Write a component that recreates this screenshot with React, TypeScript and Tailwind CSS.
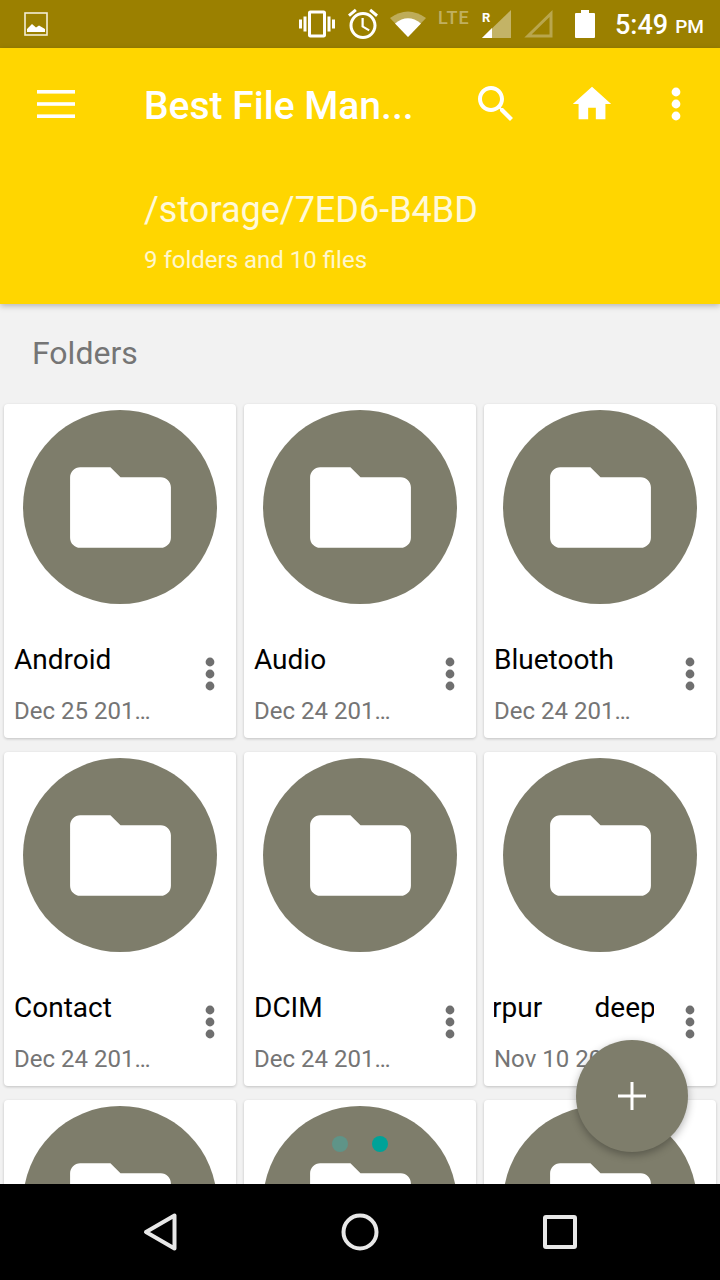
import React from 'react';

const folders = [
  { name: 'Android', date: 'Dec 25 201…' },
  { name: 'Audio', date: 'Dec 24 201…' },
  { name: 'Bluetooth', date: 'Dec 24 201…' },
  { name: 'Contact', date: 'Dec 24 201…' },
  { name: 'DCIM', date: 'Dec 24 201…' },
  { name: 'rpur        deep', date: 'Nov 10 201…', pull: true },
  { name: 'Download', date: 'Dec 24 201…' },
  { name: 'Movies', date: 'Dec 24 201…' },
  { name: 'Music', date: 'Dec 24 201…' },
];

function Kebab({ className, fill }: { className: string; fill: string }) {
  return (
    <svg viewBox="0 0 10 34" className={className} fill={fill}>
      <circle cx="5" cy="5" r="4.4" />
      <circle cx="5" cy="17" r="4.4" />
      <circle cx="5" cy="29" r="4.4" />
    </svg>
  );
}

function StatusBar() {
  return (
    <div className="h-[48px] shrink-0 bg-[#9b8000] flex items-center text-white">
      <svg viewBox="0 0 24 24" className="ml-[24px] w-[24px] h-[24px]" fill="none">
        <rect x="1" y="1" width="22" height="22" stroke="#f3edd5" strokeWidth="1.6" />
        <path d="M3 20 L3 17 L8 12 L12 15.5 L15 13.5 L21 17 L21 20 Z" fill="#fff" />
      </svg>
      <svg viewBox="0 0 24 24" className="ml-[251px] w-[36px] h-[36px]" fill="#fff">
        <path d="M0 15h2V9H0v6zm3 2h2V7H3v10zm19-8v6h2V9h-2zm-3 8h2V7h-2v10zM16.5 3h-9C6.67 3 6 3.67 6 4.5v15c0 .83.67 1.5 1.5 1.5h9c.83 0 1.5-.67 1.5-1.5v-15c0-.83-.67-1.5-1.5-1.5zM16 19H8V5h8v14z" />
      </svg>
      <svg viewBox="0 0 24 24" className="ml-[10px] w-[36px] h-[36px]" fill="#fff">
        <path d="M22 5.72l-4.6-3.86-1.29 1.53 4.6 3.86L22 5.72zM7.88 3.39L6.6 1.86 2 5.71l1.29 1.53 4.59-3.85zM12.5 8H11v6l4.75 2.85.75-1.23-4-2.37V8zM12 4c-4.97 0-9 4.03-9 9s4.03 9 9 9 9-4.03 9-9-4.03-9-9-9zm0 16c-3.87 0-7-3.13-7-7s3.13-7 7-7 7 3.13 7 7-3.13 7-7 7z" />
      </svg>
      <svg viewBox="0 0 36 28" className="ml-[9px] w-[36px] h-[28px]" fill="#fff">
        <path d="M0 8 Q18 -5 36 8 L18 27 Z" opacity="0.35" />
        <path d="M5 13.5 Q18 3 31 13.5 L18 27 Z" />
      </svg>
      <span className="ml-[12px] w-[40px] -mt-[12px] text-[18px] leading-[18px] font-medium tracking-[1px] text-white/40">LTE</span>
      <div className="relative w-[30px] h-[30px] ml-[3px]">
        <svg viewBox="0 0 30 30" className="w-[30px] h-[30px]" fill="#fff">
          <path d="M30 1 L30 29 L1 29 Z" opacity="0.4" />
          <path d="M11 19 L11 29 L1 29 Z" />
        </svg>
        <span className="absolute left-[1px] top-[2px] text-[13px] leading-[14px] font-bold">R</span>
      </div>
      <svg viewBox="0 0 30 30" className="ml-[13px] w-[30px] h-[30px]" fill="none">
        <path d="M27 4.5 L27 27 L4 27 Z" stroke="#fff" strokeOpacity="0.3" strokeWidth="3" />
      </svg>
      <svg viewBox="0 0 20 28" className="ml-[21px] w-[20px] h-[28px]" fill="#fff">
        <path d="M6 0h8v3h5a1 1 0 0 1 1 1v23a1 1 0 0 1-1 1H1a1 1 0 0 1-1-1V4a1 1 0 0 1 1-1h5z" />
      </svg>
      <span className="ml-[20px] mt-[2px] text-[27px] leading-[32px] font-medium">5:49</span>
      <span className="ml-[7px] mt-[5px] text-[19px] leading-[24px] font-medium">PM</span>
    </div>
  );
}

function AppHeader() {
  return (
    <header className="h-[256px] shrink-0 bg-[#ffd600] text-white shadow-[0_2px_6px_rgba(0,0,0,0.25)] z-10">
      <div className="h-[112px] flex items-center">
        <svg viewBox="0 0 38 28" className="ml-[37px] w-[38px] h-[28px]" fill="#fff">
          <rect y="0" width="38" height="3.6" />
          <rect y="12.2" width="38" height="3.6" />
          <rect y="24.4" width="38" height="3.6" />
        </svg>
        <h1 className="ml-[69px] mt-[4px] w-[301px] text-[39px] leading-[48px] font-medium whitespace-nowrap">Best File Man...</h1>
        <svg viewBox="0 0 24 24" className="ml-[27px] w-[48px] h-[48px]" fill="#fff">
          <path d="M15.5 14h-.79l-.28-.27C15.41 12.59 16 11.11 16 9.5 16 5.91 13.09 3 9.5 3S3 5.91 3 9.5 5.91 16 9.5 16c1.61 0 3.09-.59 4.23-1.57l.27.28v.79l5 4.99L20.49 19l-4.99-5zm-6 0C7.01 14 5 11.99 5 9.5S7.01 5 9.5 5 14 7.01 14 9.5 11.99 14 9.5 14z" />
        </svg>
        <svg viewBox="0 0 24 24" className="ml-[49px] w-[46px] h-[46px]" fill="#fff">
          <path d="M10 20v-6h4v6h5v-8h3L12 3 2 12h3v8z" />
        </svg>
        <Kebab className="ml-[56px] w-[10px] h-[34px]" fill="#fff" />
      </div>
      <div className="ml-[144px] mt-[28px] text-[36px] leading-[44px] text-white/85">/storage/7ED6-B4BD</div>
      <div className="ml-[144px] mt-[13px] text-[24px] leading-[30px] text-white/80">9 folders and 10 files</div>
    </header>
  );
}

function FolderCard({ name, date, pull }: { name: string; date: string; pull?: boolean }) {
  return (
    <div className="h-[334px] bg-white rounded-[4px] shadow-[0_1px_3px_rgba(0,0,0,0.2)] pt-[6px]">
      <div className="w-[194px] h-[194px] mx-auto rounded-full bg-[#7e7d6b] flex items-center justify-center">
        <svg viewBox="0 0 24 24" className="w-[121px] h-[121px]" fill="#fff">
          <path d="M10 4H4c-1.1 0-2 .9-2 2v12c0 1.1.9 2 2 2h16c1.1 0 2-.9 2-2V8c0-1.1-.9-2-2-2h-8l-2-2z" />
        </svg>
      </div>
      <div className="flex mt-[39px] pl-[10px]">
        <div className="w-[160px] overflow-hidden">
          <div className={`text-[28px] leading-[34px] text-black whitespace-pre ${pull ? '-ml-[2px] [word-spacing:-0.4px]' : ''}`}>{name}</div>
          <div className="mt-[19px] text-[24px] leading-[30px] text-[#757575] whitespace-nowrap">{date}</div>
        </div>
        <Kebab className="ml-[31px] mt-[14px] w-[10px] h-[34px]" fill="#6f6f6f" />
      </div>
    </div>
  );
}

export default function App() {
  return (
    <div className="relative w-[720px] h-[1280px] overflow-hidden flex flex-col bg-[#f2f2f2] font-['Roboto',sans-serif]">
      <StatusBar />
      <AppHeader />
      <main className="flex-1 overflow-hidden">
        <h2 className="mt-[31px] ml-[32px] text-[32px] leading-[36px] text-[#757575]">Folders</h2>
        <div className="mt-[33px] px-[4px] grid grid-cols-3 gap-x-[8px] gap-y-[14px]">
          {folders.map((f) => (
            <FolderCard key={f.name} name={f.name} date={f.date} pull={f.pull} />
          ))}
        </div>
      </main>
      <nav className="relative z-10 h-[96px] shrink-0 bg-black flex items-center">
        <svg viewBox="0 0 36 40" className="ml-[142px] w-[36px] h-[40px]" fill="none" stroke="#e8e8e8" strokeWidth="4" strokeLinejoin="round">
          <path d="M32.5 3.5 L32.5 36.5 L4 20 Z" />
        </svg>
        <svg viewBox="0 0 40 40" className="ml-[162px] w-[40px] h-[40px]" fill="none" stroke="#e8e8e8" strokeWidth="4">
          <circle cx="20" cy="20" r="16.5" />
        </svg>
        <svg viewBox="0 0 36 36" className="ml-[162px] w-[36px] h-[36px]" fill="none" stroke="#e8e8e8" strokeWidth="4">
          <rect x="3" y="3" width="30" height="30" rx="1" />
        </svg>
      </nav>

      {/* page dots and the add button float over the grid */}
      <div className="absolute left-[332px] top-[1136px] flex gap-[24px]">
        <span className="w-[16px] h-[16px] rounded-full bg-[#5f9488]" />
        <span className="w-[16px] h-[16px] rounded-full bg-[#00a298]" />
      </div>
      <button className="absolute left-[576px] top-[1040px] w-[112px] h-[112px] rounded-full bg-[#7e7d6b] flex items-center justify-center shadow-[0_3px_8px_rgba(0,0,0,0.3)]">
        <svg viewBox="0 0 28 28" className="w-[28px] h-[28px]" fill="#fff">
          <rect x="0" y="12.5" width="28" height="3" />
          <rect x="12.5" y="0" width="3" height="28" />
        </svg>
      </button>
    </div>
  );
}
